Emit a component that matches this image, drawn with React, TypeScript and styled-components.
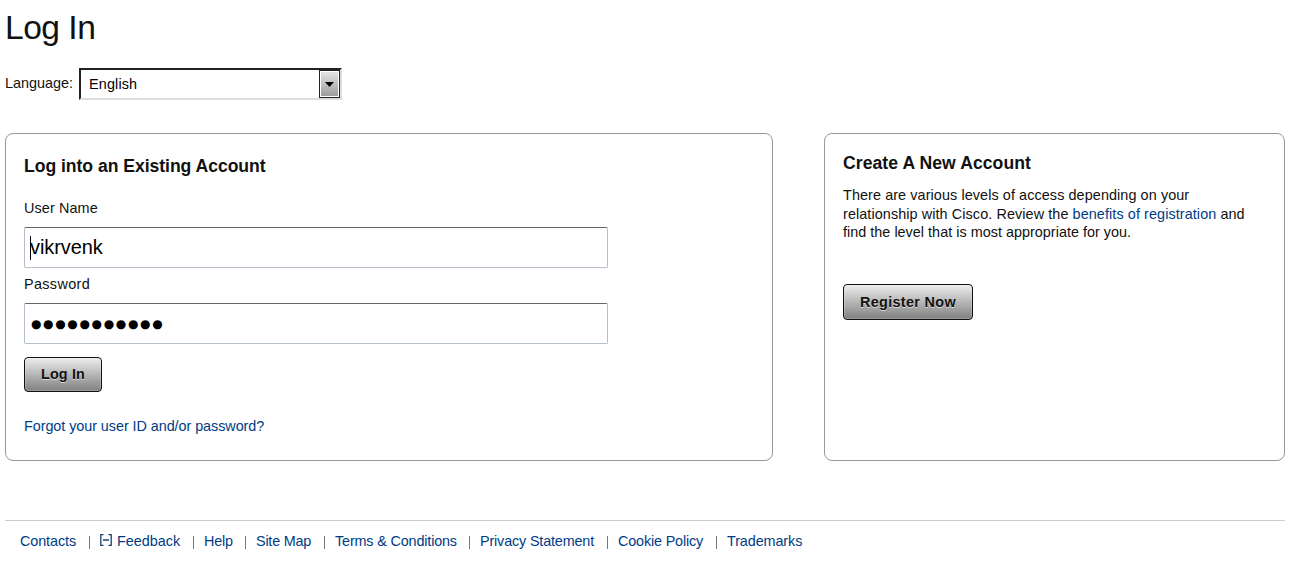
import React from 'react';
import styled, { createGlobalStyle } from 'styled-components';

const GlobalStyle = createGlobalStyle`
  * { box-sizing: border-box; }
  body {
    margin: 0;
    background: #fff;
    color: #111;
    font-family: "Liberation Sans", Arial, sans-serif;
    font-size: 14.4px;
    line-height: 18px;
  }
`;

const Page = styled.div`
  width: 1290px;
  height: 564px;
  padding: 8px 5px 0;
  overflow: hidden;
`;

const Title = styled.h1`
  margin: 0;
  height: 40px;
  font-size: 33.6px;
  line-height: 40px;
  font-weight: 400;
  letter-spacing: -0.5px;
`;

const LanguageRow = styled.div`
  display: flex;
  margin-top: 20px;
  height: 32px;
`;

const LanguageLabel = styled.label`
  width: 74px;
  padding-top: 6px;
`;

const Select = styled.div`
  display: flex;
  width: 263px;
  height: 32px;
  border: 2px solid;
  border-color: #222 #ddd #ddd #222;
  color: #000;
`;

const SelectValue = styled.span`
  flex: 1;
  padding: 5px 0 0 8px;
  letter-spacing: 0.15px;
`;

const SelectArrow = styled.span`
  display: flex;
  align-items: center;
  justify-content: center;
  width: 21px;
  height: 28px;
  border: 1px solid #222;
  box-shadow: inset 0 0 0 1px #fff;
  background: linear-gradient(#e6e6e6, #999);
`;

const Panels = styled.main`
  display: flex;
  justify-content: space-between;
  margin-top: 33px;
`;

const Panel = styled.section<{ $width: number; $top: number }>`
  width: ${(p) => p.$width}px;
  height: 328px;
  padding: ${(p) => p.$top}px 18px 0;
  border: 1px solid #999;
  border-radius: 8px;
`;

const Heading = styled.h2<{ $tracking: number }>`
  margin: 0;
  font-size: 17.6px;
  line-height: 22px;
  font-weight: 700;
  letter-spacing: ${(p) => p.$tracking}px;
`;

const FieldLabel = styled.label<{ $gap: number; $tracking: number }>`
  display: block;
  margin-top: ${(p) => p.$gap}px;
  letter-spacing: ${(p) => p.$tracking}px;
`;

const Field = styled.div`
  display: flex;
  align-items: center;
  width: 584px;
  height: 41px;
  margin-top: 10px;
  padding-left: 5px;
  border: 1px solid #b4bfca;
  border-top-color: #666;
  border-radius: 2px;
  color: #000;
  font-size: 20px;
`;

const Caret = styled.span`
  width: 1px;
  height: 24px;
  margin-right: -1px;
  background: #000;
`;

const FieldText = styled.span`
  padding-bottom: 2px;
  letter-spacing: -0.08px;
`;

const Dots = styled.span`
  padding-left: 1px;
  font-family: "DejaVu Sans", sans-serif;
  font-size: 12px;
  letter-spacing: 1.65px;
`;

const Button = styled.button<{
  $width: number;
  $height: number;
  $gap: number;
  $tracking: number;
}>`
  display: block;
  width: ${(p) => p.$width}px;
  height: ${(p) => p.$height}px;
  margin-top: ${(p) => p.$gap}px;
  padding: 0 0 1px;
  border: 1px solid #111;
  border-radius: 4px;
  background: linear-gradient(#ededed, #808080);
  box-shadow: inset 0 0 0 1px rgba(255, 255, 255, 0.2);
  color: #111;
  font: 700 14.4px/18px "Liberation Sans", Arial, sans-serif;
  letter-spacing: ${(p) => p.$tracking}px;
  text-shadow: 0 1px 0 rgba(255, 255, 255, 0.6);
  white-space: nowrap;
`;

const Link = styled.a<{ $tracking?: number }>`
  color: #003b85;
  text-decoration: none;
  letter-spacing: ${(p) => (p.$tracking === undefined ? 'inherit' : `${p.$tracking}px`)};
`;

const Forgot = styled.p`
  margin: 25px 0 0;
`;

const Copy = styled.p`
  margin: 12px 0 0;
  height: 55px;
  white-space: nowrap;
`;

const CopyLine = styled.span<{ $height: number; $tracking: number }>`
  display: block;
  height: ${(p) => p.$height}px;
  letter-spacing: ${(p) => p.$tracking}px;
`;

const Footer = styled.footer`
  display: flex;
  margin-top: 59px;
  padding: 11px 0 0 15px;
  border-top: 1px solid #ccc;
`;

const FooterItem = styled.span<{ $width: number }>`
  display: flex;
  flex: none;
  width: ${(p) => p.$width}px;
  white-space: nowrap;
`;

const Divider = styled.i`
  width: 1px;
  height: 13px;
  margin: 4px 10px 0 auto;
  background: #777;
`;

const FeedbackMark = styled.svg`
  margin: 2px 5px 0 0;
`;

const footerLinks = [
  { text: 'Contacts', width: 80, tracking: -0.1 },
  { text: 'Feedback', width: 104, tracking: 0, mark: true },
  { text: 'Help', width: 52, tracking: -0.2 },
  { text: 'Site Map', width: 79, tracking: -0.22 },
  { text: 'Terms & Conditions', width: 145, tracking: -0.16 },
  { text: 'Privacy Statement', width: 138, tracking: -0.16 },
  { text: 'Cookie Policy', width: 109, tracking: -0.16 },
  { text: 'Trademarks', width: 80, tracking: -0.1 },
];

export default function App() {
  return (
    <>
      <GlobalStyle />
      <Page>
        <Title>Log In</Title>
        <LanguageRow>
          <LanguageLabel>Language:</LanguageLabel>
          <Select>
            <SelectValue>English</SelectValue>
            <SelectArrow>
              <svg width="9" height="5" viewBox="0 0 9 5">
                <path d="M0 0h9L4.5 5z" fill="#000" />
              </svg>
            </SelectArrow>
          </Select>
        </LanguageRow>
        <Panels>
          <Panel $width={768} $top={21}>
            <Heading $tracking={-0.04}>Log into an Existing Account</Heading>
            <FieldLabel $gap={22} $tracking={0.12}>User Name</FieldLabel>
            <Field>
              <Caret />
              <FieldText>vikrvenk</FieldText>
            </Field>
            <FieldLabel $gap={7} $tracking={0.35}>Password</FieldLabel>
            <Field>
              <Dots>●●●●●●●●●●●</Dots>
            </Field>
            <Button $width={78} $height={35} $gap={13} $tracking={0.15}>Log In</Button>
            <Forgot>
              <Link $tracking={-0.06}>Forgot your user ID and/or password?</Link>
            </Forgot>
          </Panel>
          <Panel $width={461} $top={18}>
            <Heading $tracking={0.06}>Create A New Account</Heading>
            <Copy>
              <CopyLine $height={19} $tracking={0.09}>
                There are various levels of access depending on your
              </CopyLine>
              <CopyLine $height={18} $tracking={0.09}>
                relationship with Cisco. Review the <Link>benefits of registration</Link> and
              </CopyLine>
              <CopyLine $height={18} $tracking={0.02}>
                find the level that is most appropriate for you.
              </CopyLine>
            </Copy>
            <Button $width={130} $height={36} $gap={43} $tracking={0.33}>Register Now</Button>
          </Panel>
        </Panels>
        <Footer>
          {footerLinks.map((item, i) => (
            <FooterItem key={item.text} $width={item.width}>
              {item.mark && (
                <FeedbackMark width="12" height="12" viewBox="0 0 12 12">
                  <path
                    d="M3.5 .6H.8v10.8h2.7M8.5 .6h2.7v10.8H8.5M3 6h6"
                    fill="none"
                    stroke="#17406f"
                    strokeWidth="1.3"
                  />
                </FeedbackMark>
              )}
              <Link $tracking={item.tracking}>{item.text}</Link>
              {i < footerLinks.length - 1 && <Divider />}
            </FooterItem>
          ))}
        </Footer>
      </Page>
    </>
  );
}
